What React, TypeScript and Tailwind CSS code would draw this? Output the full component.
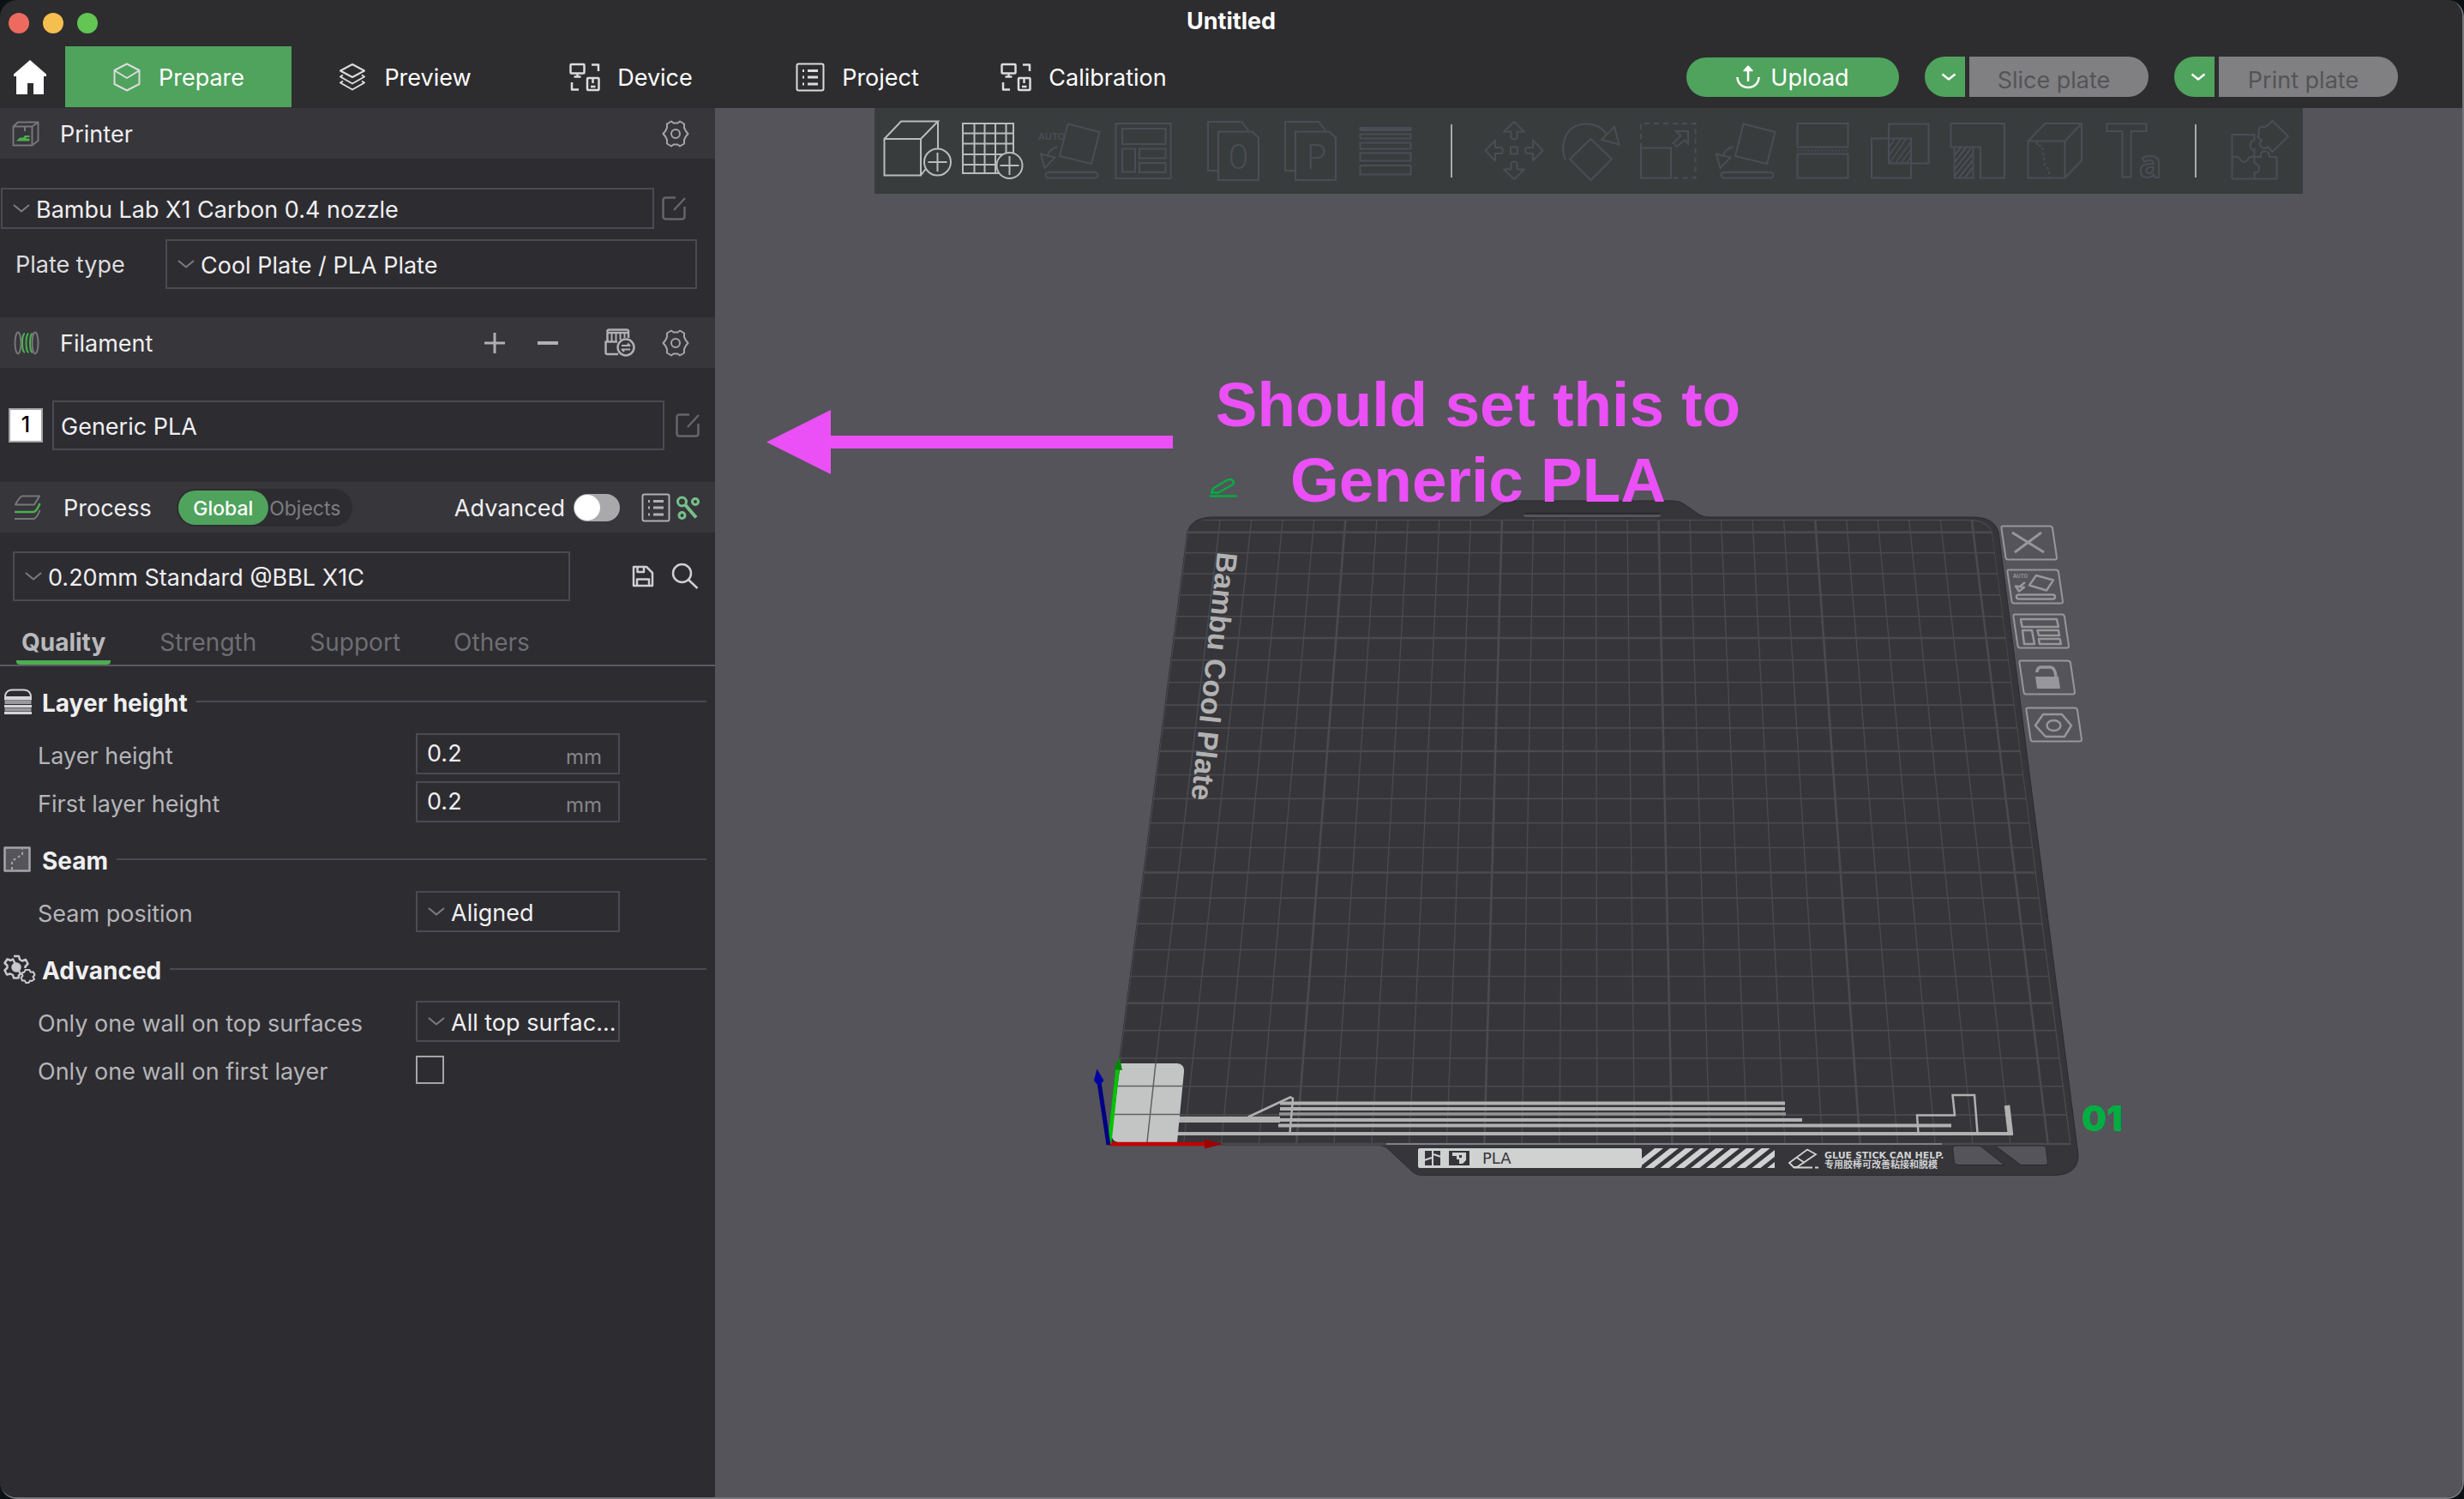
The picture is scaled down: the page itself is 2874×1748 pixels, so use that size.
import type { ReactNode } from 'react';

type IconProps = { className?: string };

const svgBase = { fill: 'none', stroke: 'currentColor', strokeWidth: 2, strokeLinejoin: 'round' as const };

/* ---------- small icons ---------- */

const HomeIcon = () => (
  <svg viewBox="0 0 40 40" className="h-10 w-10" fill="currentColor" aria-hidden="true">
    <path d="M20 0 39 16.500V19H36V40H24V27H17V40H4V19H1V16.500Z" />
  </svg>
);

const CubeIcon = () => (
  <svg viewBox="0 0 34 34" className="h-[34px] w-[34px]" {...svgBase} aria-hidden="true">
    <path d="M17 1.500 31.500 9V25L17 32.500 2.500 25V9Z" />
    <path d="M3 9.500 17 18 31 9.500" />
  </svg>
);

const StackIcon = () => (
  <svg viewBox="0 0 34 34" className="h-[34px] w-[34px]" {...svgBase} aria-hidden="true">
    <path d="M17 2 31 9.500 17 17 3 9.500Z" />
    <path d="M6 14.500 3 16.500 17 24.500 31 16.500 28 14.500" />
    <path d="M6 21.500 3 23.500 17 31.500 31 23.500 28 21.500" />
  </svg>
);

const DeviceIcon = () => (
  <svg viewBox="0 0 36 34" className="h-[34px] w-9" {...svgBase} strokeWidth={2.5} aria-hidden="true">
    <rect x="1.500" y="2" width="16" height="10.500" rx="1" />
    <path d="M9.500 12.500V16M5.500 16.500H13.500" />
    <path d="M26 2.500H34V10" />
    <path d="M3 23V31.500H11" />
    <rect x="21" y="18" width="13.500" height="14" rx="1" />
    <path d="M27.500 18V24M25 28H30.500" />
  </svg>
);

const ListIcon = ({ className = 'h-[34px] w-[34px]' }: IconProps) => (
  <svg viewBox="0 0 34 34" className={className} {...svgBase} aria-hidden="true">
    <rect x="1.500" y="1.500" width="31" height="31" rx="2" />
    <path d="M8 9.500H10M14 9.500H26M8 17H10M14 17H26M8 25H10M14 25H26" strokeWidth={3} />
  </svg>
);

const UploadIcon = () => (
  <svg viewBox="0 0 28 28" className="h-7 w-7" {...svgBase} strokeWidth={2.500} aria-hidden="true">
    <path d="M14 19V4" />
    <path d="M14 1 19 6.500H9Z" fill="currentColor" strokeWidth={1.500} />
    <path d="M1.500 14C1.500 21 7 26 14 26S26.500 21 26.500 14" />
  </svg>
);

const ChevronIcon = ({ className = '' }: IconProps) => (
  <svg viewBox="0 0 22 12" className={'h-3 w-[22px] ' + className} {...svgBase} aria-hidden="true">
    <path d="M2 2 11 9.500 20 2" />
  </svg>
);

const SmallChevron = () => (
  <svg viewBox="0 0 18 10" className="h-[10px] w-[18px]" {...svgBase} strokeWidth={2.500} aria-hidden="true">
    <path d="M1.500 1.500 9 7.500 16.500 1.500" />
  </svg>
);

const PrinterIcon = () => (
  <svg viewBox="0 0 32 30" className="h-[30px] w-8" {...svgBase} stroke="#77777b" aria-hidden="true">
    <path d="M1.500 6.500H23.500V28.500H1.500ZM1.500 6.500 7 1.500H30.500L23.500 6.500M30.500 1.500V23L23.500 28.500" />
    <path d="M15 6.500V12" />
    <path d="M5 23.500 9 19.500H13L15 17H20.500V19H16.500V20.500H20.500V23.500Z" fill="#4caf50" stroke="none" />
  </svg>
);

const GearIcon = () => (
  <svg viewBox="0 0 32 32" className="h-8 w-8" {...svgBase} aria-hidden="true">
    <path d="M11 1.500 13.500 3.500H18.500L21 1.500 26 4.500V9L28 13 30.500 16 28 19 26 23V27.500L21 30.500 18.500 28.500H13.500L11 30.500 6 27.500V23L4 19 1.500 16 4 13 6 9V4.500Z" />
    <circle cx="16" cy="16" r="5" />
  </svg>
);

const EditIcon = () => (
  <svg viewBox="0 0 28 28" className="h-7 w-7" {...svgBase} strokeWidth={2.500} aria-hidden="true">
    <path d="M16 1.500H4A3 3 0 0 0 1.500 4V24A3 3 0 0 0 4 26.500H24A3 3 0 0 0 26.500 24V12" />
    <path d="M14 16 27 2" />
  </svg>
);

const FilamentIcon = () => (
  <svg viewBox="0 0 30 28" className="h-7 w-[30px]" {...svgBase} aria-hidden="true">
    <g stroke="#77777b">
      <ellipse cx="5" cy="14" rx="3.500" ry="12.500" />
      <ellipse cx="25" cy="14" rx="3.500" ry="12.500" />
    </g>
    <path d="M13 3C9 3 9 25 13 25M17.500 3C13.500 3 13.500 25 17.500 25M22 3C18 3 18 25 22 25" stroke="#4caf50" />
  </svg>
);

const AmsIcon = () => (
  <svg viewBox="0 0 36 34" className="h-[34px] w-9" {...svgBase} strokeWidth={2.500} aria-hidden="true">
    <path d="M3.500 15V4A2 2 0 0 1 6 1.500H26A2 2 0 0 1 28 4V11M3.500 5H28" />
    <path d="M8.500 5V15M13.500 5V15M18.500 5V13M23.500 5V11" strokeWidth={2} />
    <path d="M15 15.500H1.500V28A2 2 0 0 0 3.500 30H16" />
    <circle cx="25" cy="22" r="9.500" />
    <path d="M20 20H29.500L27 17.500M30 24.500H20.500L23 27" strokeWidth={2} />
  </svg>
);

const ProcessIcon = () => (
  <svg viewBox="0 0 32 30" className="h-[30px] w-8" {...svgBase} stroke="#77777b" aria-hidden="true">
    <path d="M10 1.500H30L24 11.500H2Q7 2 10 1.500Z" />
    <path d="M1 20H23.500Q27 19 30.500 10" stroke="#4caf50" strokeWidth={2.500} />
    <path d="M1 28H23.500Q27 27 30.500 18" />
  </svg>
);

const ParamIcon = () => (
  <svg viewBox="0 0 28 30" className="h-[30px] w-7" {...svgBase} stroke="#78c08a" strokeWidth={3} aria-hidden="true">
    <circle cx="7.500" cy="8" r="5" />
    <circle cx="23" cy="8" r="3.500" />
    <circle cx="7.500" cy="24" r="3.500" />
    <path d="M11.500 12 24 26.500" strokeWidth={4} />
  </svg>
);

const SaveIcon = () => (
  <svg viewBox="0 0 26 26" className="h-[26px] w-[26px]" {...svgBase} strokeWidth={2.500} aria-hidden="true">
    <path d="M2 2H17L24 9V24H2Z" />
    <path d="M6.500 2V8H14V2M6 24V16.500H20V24" />
  </svg>
);

const SearchIcon = () => (
  <svg viewBox="0 0 32 32" className="h-8 w-8" {...svgBase} strokeWidth={2.500} aria-hidden="true">
    <circle cx="12.500" cy="12.500" r="10.500" />
    <path d="M20 20 30.500 30" />
  </svg>
);

const LayersIcon = () => (
  <svg viewBox="0 0 34 30" className="h-[30px] w-[34px]" {...svgBase} stroke="#d5d5d7" aria-hidden="true">
    <path d="M2 10C2 4 6 1.500 10 1.500H24C28 1.500 32 4 32 10Z" />
    <path d="M1 12H33M1 20.500H33M1 28.500H33" strokeWidth={3} />
    <path d="M1.500 16H32.500M1.500 24.500H32.500" stroke="#9a9a9e" strokeWidth={4} />
  </svg>
);

const SeamIcon = () => (
  <svg viewBox="0 0 32 30" className="h-[30px] w-8" {...svgBase} stroke="#a5a5a9" strokeWidth={2.500} aria-hidden="true">
    <rect x="1.500" y="1.500" width="29" height="27" fill="#55545a" />
    <path d="M10 27V17L22 9.500V3" strokeDasharray="3 3" strokeWidth={2} />
  </svg>
);

const GearsIcon = () => (
  <svg viewBox="0 0 38 34" className="h-[34px] w-[38px]" {...svgBase} stroke="#c9c9cc" strokeWidth={2.500} aria-hidden="true">
    <path d="M12 2H18L19 6 22 7.500 26 6 28.500 11 25.500 14V16M20 23 18 24 17.500 27.500H12L11 24 8 22.500 4 23.500 1.500 18.500 4.500 15.500V13L1.500 10 4.500 5.500 8.500 7 11 5.500Z" />
    <circle cx="15" cy="15" r="4.500" fill="#c9c9cc" />
    <path d="M25.500 18H30.500L31.500 20.500 35 20.500 36.500 24 34.500 26 36 29 33 31 31 30.500 29.500 33H26L25 30.500 22 30.500 20.500 27 22.500 25 21.500 21.500 24.500 20.500Z" strokeWidth={2} />
  </svg>
);

/* ---------- header ---------- */

function Tab({ icon, label, active }: { icon: ReactNode; label: string; active?: boolean }) {
  return (
    <button
      type="button"
      className={
        'flex h-[71px] w-[264px] shrink-0 items-center justify-center gap-5 text-white ' +
        (active ? 'bg-[#4fa35d]' : '')
      }
    >
      <span className="text-[#dcdcdd]">{icon}</span>
      <span className="pt-1">{label}</span>
    </button>
  );
}

function SplitButton({ label }: { label: string }) {
  return (
    <div className="flex h-[47px] gap-[5px]">
      <button
        type="button"
        aria-label={label + ' options'}
        className="flex w-[47px] items-center justify-center rounded-l-full bg-[#4fa35d] pl-2 text-white"
      >
        <SmallChevron />
      </button>
      <button type="button" className="w-[209px] rounded-r-full bg-[#808082] pr-3 pt-2 text-[#545456]">
        {label}
      </button>
    </div>
  );
}

function Header() {
  return (
    <header className="bg-[#2d2d2f] text-[27px]">
      <div className="flex h-[54px] items-center px-[10px]">
        <div className="flex flex-1 gap-4">
          <span className="h-6 w-6 rounded-full bg-[#ed6a5e]" />
          <span className="h-6 w-6 rounded-full bg-[#f5bf4f]" />
          <span className="h-6 w-6 rounded-full bg-[#62c554]" />
        </div>
        <h1 className="pb-1 text-[27px] font-bold text-white">Untitled</h1>
        <div className="flex-1" />
      </div>
      <div className="flex h-[72px] items-start pr-[75px]">
        <button type="button" aria-label="Home" className="flex h-[72px] w-[76px] items-center pl-[15px] text-white">
          <HomeIcon />
        </button>
        <nav className="flex">
          <Tab icon={<CubeIcon />} label="Prepare" active />
          <Tab icon={<StackIcon />} label="Preview" />
          <Tab icon={<DeviceIcon />} label="Device" />
          <Tab icon={<ListIcon />} label="Project" />
          <Tab icon={<DeviceIcon />} label="Calibration" />
        </nav>
        <div className="ml-auto flex items-center gap-[30px] pt-3">
          <button
            type="button"
            className="flex h-[46px] w-[248px] items-center justify-center gap-3 rounded-full bg-[#4fa35d] text-white"
          >
            <UploadIcon />
            <span className="pt-1">Upload</span>
          </button>
          <SplitButton label="Slice plate" />
          <SplitButton label="Print plate" />
        </div>
      </div>
    </header>
  );
}

/* ---------- sidebar ---------- */

function Select({ id, label, value, className, chevron = true }: {
  id: string;
  label?: string;
  value: string;
  className: string;
  chevron?: boolean;
}) {
  return (
    <div className={'relative ' + className}>
      <select
        id={id}
        aria-label={label}
        defaultValue={value}
        className={
          'h-full w-full appearance-none overflow-hidden border-2 border-[#4b4a50] bg-transparent pt-1 text-[#efeff0] outline-none ' +
          (chevron ? 'pl-[39px]' : 'pl-2')
        }
      >
        <option value={value}>{value}</option>
      </select>
      {chevron && <ChevronIcon className="pointer-events-none absolute left-[13px] top-1/2 -mt-[6px] text-[#7c7c80]" />}
    </div>
  );
}

function SectionBar({ children }: { children: ReactNode }) {
  return <div className="flex h-[59px] items-center bg-[#37363b] text-[#efeff0]">{children}</div>;
}

function IconButton({ label, className = '', children }: { label: string; className?: string; children: ReactNode }) {
  return (
    <button type="button" aria-label={label} className={'shrink-0 ' + className}>
      {children}
    </button>
  );
}

function Group({ icon, title, children }: { icon: ReactNode; title: string; children: ReactNode }) {
  return (
    <section>
      <div className="flex h-[34px] items-center pl-1 pr-[10px]">
        <span className="w-[45px]">{icon}</span>
        <h2 className="pt-1 text-[28px] font-bold text-[#efeff0]">{title}</h2>
        <span className="ml-[10px] h-[2px] flex-1 bg-[#4b4a50]" />
      </div>
      <div className="flex flex-col gap-2 pt-5">{children}</div>
    </section>
  );
}

function Row({ id, label, children }: { id: string; label: string; children: ReactNode }) {
  return (
    <div className="flex h-12 items-center">
      <label htmlFor={id} className="w-[485px] pl-11 pt-[6px] text-[#b5b5b8]">
        {label}
      </label>
      {children}
    </div>
  );
}

function NumberField({ id, value }: { id: string; value: string }) {
  return (
    <div className="flex h-12 w-[238px] items-center border-2 border-[#4b4a50] px-[11px]">
      <input id={id} defaultValue={value} className="w-full min-w-0 bg-transparent text-[#efeff0] outline-none" />
      <span className="pr-2 pt-2 text-[24px] text-[#858589]">mm</span>
    </div>
  );
}

function Sidebar() {
  return (
    <aside className="w-[834px] shrink-0 bg-[#2d2c31] text-[27px]">
      <SectionBar>
        <span className="w-[70px] pl-[14px]"><PrinterIcon /></span>
        <h2 className="pt-1">Printer</h2>
        <IconButton label="Printer settings" className="ml-auto mr-[30px] text-[#a5a5a9]"><GearIcon /></IconButton>
      </SectionBar>
      <div className="flex items-center gap-[9px] pl-[1px] pt-[34px]">
        <Select id="printer" label="Printer preset" value="Bambu Lab X1 Carbon 0.4 nozzle" className="h-12 w-[762px]" />
        <IconButton label="Edit printer preset" className="text-[#66666a]"><EditIcon /></IconButton>
      </div>
      <div className="flex items-center pb-[33px] pl-[18px] pt-3">
        <label htmlFor="plate-type" className="w-[175px] pt-[2px] text-[#dcdcdd]">Plate type</label>
        <Select id="plate-type" value="Cool Plate / PLA Plate" className="h-[58px] w-[620px]" />
      </div>

      <SectionBar>
        <span className="w-[70px] pl-4"><FilamentIcon /></span>
        <h2 className="pt-1">Filament</h2>
        <div className="ml-auto mr-[30px] flex items-center text-[#b0b0b3]">
          <IconButton label="Add filament" className="mr-9">
            <svg viewBox="0 0 26 26" className="h-[26px] w-[26px]" {...svgBase} strokeWidth={3} aria-hidden="true">
              <path d="M13 1V25M1 13H25" />
            </svg>
          </IconButton>
          <IconButton label="Remove filament" className="mr-[53px]">
            <svg viewBox="0 0 26 26" className="h-[26px] w-[26px]" {...svgBase} strokeWidth={4} aria-hidden="true">
              <path d="M1 13H25" />
            </svg>
          </IconButton>
          <IconButton label="Synchronize filaments" className="mr-[31px]"><AmsIcon /></IconButton>
          <IconButton label="Filament settings" className="text-[#a5a5a9]"><GearIcon /></IconButton>
        </div>
      </SectionBar>
      <div className="flex items-center pb-[37px] pl-[10px] pt-[38px]">
        <span className="flex h-10 w-10 items-center justify-center border-2 border-[#a5a5a9] bg-white text-[25px] font-medium text-black">
          1
        </span>
        <Select id="filament" label="Filament 1" value="Generic PLA" className="ml-[11px] h-[58px] w-[714px]" chevron={false} />
        <IconButton label="Edit filament preset" className="ml-[13px] text-[#66666a]"><EditIcon /></IconButton>
      </div>

      <SectionBar>
        <span className="w-[74px] pl-4"><ProcessIcon /></span>
        <h2 className="pt-1">Process</h2>
        <div className="ml-[29px] flex h-11 items-center rounded-full bg-[#2d2c31] pl-[2px] text-[23px]">
          <button type="button" className="h-10 w-[105px] rounded-full bg-[#4fa35d] pt-1 font-medium text-white">Global</button>
          <button type="button" className="w-[98px] pr-3 pt-1 text-[#7c7c80]">Objects</button>
        </div>
        <label htmlFor="advanced" className="ml-auto pr-[10px] pt-1">Advanced</label>
        <input
          id="advanced"
          type="checkbox"
          role="switch"
          className="relative h-8 w-[54px] appearance-none rounded-full bg-[#a9a9ab] before:absolute before:left-px before:top-px before:h-[30px] before:w-[30px] before:rounded-full before:bg-white"
        />
        <IconButton label="Parameter list" className="ml-[25px] text-[#b0b0b3]"><ListIcon /></IconButton>
        <IconButton label="Compare presets" className="ml-[6px] mr-[18px]"><ParamIcon /></IconButton>
      </SectionBar>
      <div className="flex items-center pl-[15px] pt-[22px] text-[#cfcfd1]">
        <Select id="process" label="Process preset" value="0.20mm Standard @BBL X1C" className="h-[58px] w-[650px]" />
        <IconButton label="Save preset" className="ml-[72px]"><SaveIcon /></IconButton>
        <IconButton label="Search settings" className="ml-5"><SearchIcon /></IconButton>
      </div>

      <div className="flex h-[76px] items-end border-b-2 border-[#5a595f] pl-[19px] text-[28px] text-[#6e6e72]">
        <button type="button" className="h-12 rounded-b-sm border-b-[5px] border-[#4caf50] px-[6px] font-bold text-[#b9b9bc]">
          Quality
        </button>
        <button type="button" className="ml-[57px] h-12 border-b-[5px] border-transparent">Strength</button>
        <button type="button" className="ml-[62px] h-12 border-b-[5px] border-transparent">Support</button>
        <button type="button" className="ml-[62px] h-12 border-b-[5px] border-transparent">Others</button>
      </div>

      <div className="flex flex-col gap-[26px] pt-6 text-[27px]">
        <Group icon={<LayersIcon />} title="Layer height">
          <Row id="layer-height" label="Layer height"><NumberField id="layer-height" value="0.2" /></Row>
          <Row id="first-layer-height" label="First layer height"><NumberField id="first-layer-height" value="0.2" /></Row>
        </Group>
        <Group icon={<SeamIcon />} title="Seam">
          <Row id="seam-position" label="Seam position">
            <Select id="seam-position" value="Aligned" className="h-12 w-[238px]" />
          </Row>
        </Group>
        <Group icon={<GearsIcon />} title="Advanced">
          <Row id="top-wall" label="Only one wall on top surfaces">
            <Select id="top-wall" value="All top surfac..." className="h-12 w-[238px]" />
          </Row>
          <Row id="first-wall" label="Only one wall on first layer">
            <input id="first-wall" type="checkbox" className="h-[33px] w-[33px] appearance-none border-2 border-[#a5a5a9]" />
          </Row>
        </Group>
      </div>
    </aside>
  );
}

/* ---------- canvas toolbar ---------- */

function Tool({ label, active, children }: { label: string; active?: boolean; children: ReactNode }) {
  return (
    <button type="button" aria-label={label} className={active ? 'text-[#b9bcba]' : 'text-[#4c4d54]'}>
      <svg viewBox="0 0 90 100" className="h-[100px] w-[90px] overflow-visible" {...svgBase} strokeLinejoin="miter">
        {children}
      </svg>
    </button>
  );
}

const Divider = () => (
  <span className="flex w-[58px] items-center justify-center">
    <span className="h-[62px] w-[2px] bg-[#a9aaab]" />
  </span>
);

const pages = (
  <>
    <path d="M27 73H15V16H54L62 26" />
    <path d="M27 27.500H66.500L74 34.500V84H27Z" />
  </>
);

const layFlat = (
  <>
    <path d="M41.500 18.500 78.500 28 69 65 32 56Z" />
    <path d="M10 53.500 26.500 57.500 14.500 70Z" />
    <path d="M18 55Q20 48 29.500 45" />
    <rect x="15.500" y="75" width="61" height="6.500" rx="3.200" />
  </>
);

function Toolbar() {
  return (
    <div className="mx-auto flex w-max bg-[#383c3d] pl-1 pr-[6px]" role="toolbar">
      <Tool label="Add object" active>
        <path d="M7.500 36H50V78.500H7.500ZM7.500 36 27 15.500H70L50 36M70 15.500V47M50 78.500 56.500 70" />
        <circle cx="69.500" cy="63" r="15.500" />
        <path d="M69.500 52V74M58.500 63H80.500" />
      </Tool>
      <Tool label="Add plate" active>
        <rect x="9" y="18" width="59" height="58" />
        <path d="M22.500 18V76M34.500 18V76M47 18V76M59.500 18V76M9 29.500H68M9 41.500H68M9 54H68M9 66H68" />
        <circle cx="63.500" cy="67" r="15" fill="#383c3d" />
        <path d="M63.500 56V78M52.500 67H74.500" />
      </Tool>
      <Tool label="Auto orient">
        {layFlat}
        <text x="7" y="37" fontSize="11" fontWeight="600" fill="currentColor" stroke="none" className="font-['Liberation_Sans']">AUTO</text>
      </Tool>
      <Tool label="Arrange">
        <rect x="7.500" y="18" width="64" height="64" />
        <rect x="15" y="24" width="50.500" height="18" />
        <rect x="15" y="47.500" width="15" height="27" />
        <rect x="35" y="47.500" width="30.500" height="11" />
        <rect x="35" y="64" width="30.500" height="11" />
      </Tool>
      <span className="w-[10px]" />
      <Tool label="Split to objects">
        {pages}
        <text x="50.500" y="71" fontSize="41" fontWeight="300" textAnchor="middle" fill="currentColor" stroke="none" className="font-['Open_Sans']">0</text>
      </Tool>
      <Tool label="Split to parts">
        {pages}
        <text x="51.500" y="71" fontSize="41" fontWeight="300" textAnchor="middle" fill="currentColor" stroke="none" className="font-['Open_Sans']">P</text>
      </Tool>
      <Tool label="Variable layer height">
        <rect x="12.500" y="23" width="59" height="3" fill="currentColor" />
        <rect x="12.500" y="30.500" width="59" height="5" />
        <rect x="12.500" y="40.500" width="59" height="7" />
        <rect x="12.500" y="52.500" width="59" height="9" />
        <rect x="12.500" y="67" width="59" height="10.500" />
      </Tool>
      <Divider />
      <Tool label="Move">
        {[0, 90, 180, 270].map((a) => (
          <path key={a} transform={`rotate(${a} 44 49.500)`} d="M44 16 56 27.500H47.500V35Q44 38 40.500 35V27.500H32Z" strokeLinejoin="round" />
        ))}
        <rect x="40" y="45.500" width="8" height="8" />
      </Tool>
      <Tool label="Rotate">
        <path d="M43.500 36 68 59.500 43.500 84 19 59.500Z" />
        <path d="M14 61C8 46 11 19 38 18.500Q54 18.500 62 30.500" />
        <path d="M71 22 76.500 42.500 56 37Z" />
      </Tool>
      <Tool label="Scale">
        <path d="M12 47V18H75.500V81.500H47" strokeDasharray="6 5" />
        <rect x="12" y="46.500" width="35" height="35" />
        <path d="M53 27H67V41.500L63 37.500 53.500 45 49.500 41 58.500 32.500Z" />
      </Tool>
      <Tool label="Place on face">{layFlat}</Tool>
      <Tool label="Cut">
        <rect x="14.500" y="18" width="59" height="27.500" />
        <path d="M14.500 49.500H73.500" strokeDasharray="2 2" />
        <rect x="14.500" y="53.500" width="59" height="28" />
      </Tool>
      <Tool label="Boolean">
        <rect x="31" y="18.500" width="46.500" height="46" />
        <rect x="11" y="35.500" width="46" height="46" />
        <path d="M31 46 38 36M31 56 45 36M32 64 51 36.500M39 64 57 39M45.500 64 57 48M52 64 57 57" strokeWidth={1.500} />
      </Tool>
      <Tool label="Support painting">
        <path d="M13.500 18H76V81.500H48V45.500H13.500Z" />
        <path d="M17.500 46V81.500H39.500V46" />
        <path d="M18 55 25 46M18 63 31 46.500M18 71 37 47M18 79 39 53M23 81 39 61M30 81 39 69" strokeWidth={2.500} />
      </Tool>
      <Tool label="Seam painting">
        <path d="M13.500 38.500H56.500V81.500H13.500ZM13.500 38.500 33.500 18H76V61L56.500 81.500M56.500 38.500 76 18" />
        <path d="M24 40V44H30L33 66 38 72V81" strokeDasharray="3 3" />
      </Tool>
      <Tool label="Text shape">
        <text x="38.500" y="81" fontSize="86" fontWeight="600" textAnchor="middle" className="font-['Open_Sans']">T</text>
        <text x="66" y="81" fontSize="44" fontWeight="700" textAnchor="middle" className="font-['Open_Sans']">a</text>
      </Tool>
      <Divider />
      <Tool label="Assembly view">
        <path d="M13.500 82.500V31H39.500V37Q33 40 35 46 37 50 39.500 48V57Q33 56 32 60 27 66 23 60 22 56 13.500 57M39.500 57H47Q46 50 52 50.500 57 50 57 57H65.500V82.500H13.500M39.500 57V64Q46 66 45 71 45 76 39.500 75V82.500" />
        <path d="M60.500 15 79 33 60.500 51 55 45Q51 49 47 45 44 41 48 38L43 33 45 30Q43 20 51 22L54 21Z" />
      </Tool>
    </div>
  );
}

/* ---------- build plate ---------- */

/* Perspective row of the bed grid; k counts centimetres from the front edge. */
const rowY = (k: number) => (1334 - 23.667 * k) / (1 + 0.007838 * k);
const TOP_Y = rowY(25.6);
const frontX = (k: number) => 1293 + 43.83 * k;
const backX = (k: number) => 1386.6 + 36.53 * k;
const sideX = (k: number, y: number) => frontX(k) + ((backX(k) - frontX(k)) * (1334 - y)) / (1334 - TOP_Y);
const ticks = Array.from({ length: 26 }, (_, i) => i);

function PlateButton({ label, className, children }: { label: string; className: string; children: ReactNode }) {
  return (
    <button type="button" aria-label={label} className={'absolute text-[#97969b] ' + className}>
      <svg viewBox="0 0 68 43" className="h-[43px] w-[68px]" {...svgBase} strokeWidth={2.500}>
        <path d="M3 1.500H58Q60.500 1.500 61 4L66 38Q66 40.500 64 40.500H9Q7 40.500 6.500 38L1.500 4Q1 1.500 3 1.500Z" strokeWidth={2} />
        {children}
      </svg>
    </button>
  );
}

function Plate() {
  return (
    <div className="absolute left-[436px] top-[414px] h-[840px] w-[1230px]">
      <svg viewBox="1270 540 1230 840" className="h-full w-full" role="img" aria-label="Build plate 01">
        <defs>
          <clipPath id="bed">
            <path d="M1293 1336 1385 620Q1392 606 1412 605.500H2296Q2320 606 2324 622L2416 1336Z" />
          </clipPath>
          <clipPath id="hatch">
            <rect x="1915" y="1339" width="155" height="23" />
          </clipPath>
        </defs>

        <path
          d="M1293 1335 1385 620Q1390 604 1412 603H1724Q1733 603 1738 598L1750 589Q1757 584 1766 584H1952Q1960 584 1966 589L1979 598Q1985 603 1994 603H2304Q2326 604 2331 620L2424 1347Q2424 1369 2398 1370.500H1658Q1650 1370 1645 1364L1617 1338Q1612 1335 1603 1335Z"
          fill="#36353a"
          stroke="#2b2a2f"
          strokeWidth="1"
        />
        <rect x="1777" y="599" width="160" height="4" rx="2" fill="#55545a" />
        <path d="M1778 599H1936" stroke="#222226" strokeWidth="1.500" />

        <g clipPath="url(#bed)" stroke="#4a4a4f" fill="none">
          {ticks.map((k) => (
            <path key={'r' + k} d={`M${sideX(0, rowY(k))} ${rowY(k)}H${sideX(25.6, rowY(k))}`} strokeWidth={k % 5 ? 1.6 : 2.600} />
          ))}
          {ticks.map((k) => (
            <path key={'c' + k} d={`M${frontX(k)} 1334 ${backX(k)} ${TOP_Y}`} strokeWidth={k % 5 ? 1.4 : 2.600} />
          ))}
          <path d={`M1386 ${TOP_Y}H2300Q2320 608 2324 622L2415 1334`} strokeWidth="1.600" />
        </g>

        <g stroke="#b1b1b1" fill="none">
          <path d="M1375 1305.500H1493" strokeWidth="7" />
          <path d="M1373 1322H2348" strokeWidth="4" />
          <path d="M1493 1286.500H2082M1493 1293H2082M1492 1306H2102M1491 1312.500H2276" strokeWidth="4" />
          <path d="M1492 1299H2083" strokeWidth="3.500" stroke="#939294" />
          <path d="M1456 1302.500 1505 1279.500 1508 1281 1504.500 1321" strokeWidth="2.500" />
          <path d="M2237.500 1321 2236 1300.500H2280L2277.500 1277H2303L2306.500 1321" strokeWidth="2.500" />
          <path d="M2341 1289 2345 1323" strokeWidth="6.500" />
        </g>

        <path d="M1307 1240H1373Q1382 1241 1381 1250L1373 1332H1304Q1297 1331 1296 1322Z" fill="#c3c5c4" />
        <path d="M1348 1240 1338 1332M1304 1266.500H1380M1300 1299.500H1377" stroke="#606064" strokeWidth="1.500" />

        <path d="M1293 1334.500H1617" stroke="#47474c" strokeWidth="2" />
        <path d="M1617 1334H2265" stroke="#7d8184" strokeWidth="2" />

        <rect x="1654" y="1339" width="261" height="23" rx="2" fill="#d0d2d2" />
        <g fill="#36353a">
          <rect x="1662" y="1342" width="8" height="17" />
          <rect x="1672" y="1342" width="8" height="17" />
          <rect x="1690" y="1342" width="24" height="17" />
        </g>
        <path d="M1661 1353 1670 1350M1672 1346 1681 1349" stroke="#d0d2d2" strokeWidth="2" />
        <path d="M1694 1344H1710V1353L1706 1357H1702V1352H1699V1348H1694Z" fill="#d0d2d2" />
        <rect x="1702" y="1347" width="3" height="3" fill="#36353a" />
        <text x="1729" y="1357" fontSize="18" fill="#36353a" className="font-['DejaVu_Sans']">PLA</text>
        <g clipPath="url(#hatch)" fill="#d0d2d2">
          {ticks.slice(0, 11).map((i) => (
            <path key={i} d={`M${1901 + i * 17.8} 1362h10l29 -23h-10Z`} />
          ))}
        </g>

        <path d="M2087 1356 2108 1340.500 2118 1346 2096 1361H2092ZM2096 1350 2105 1356M2092 1361.500H2114M2117 1361.500H2121" fill="none" stroke="#d0d2d2" strokeWidth="1.800" />
        <text x="2128" y="1351" fontSize="11" fontWeight="700" fill="#d0d2d2" className="font-['DejaVu_Sans']">GLUE STICK CAN HELP.</text>
        <text x="2128" y="1362" fontSize="11" fontWeight="700" fill="#d0d2d2" className="font-['Noto_Sans_CJK_SC']">专用胶棒可改善粘接和脱模</text>
        <path d="M2281 1336H2306Q2310 1336 2312 1338L2338 1358.500H2284Q2280 1358 2279.500 1356L2277.500 1339Q2278 1336 2281 1336ZM2327 1336H2383Q2386 1336 2386.500 1339L2388.500 1356Q2388 1358.500 2386 1358.500H2357Z" fill="#55545a" stroke="#29282d" strokeWidth="1" />

        <text transform="translate(1420 643) rotate(96)" fontSize="34" fontWeight="700" fill="#b1b1b1" className="font-['Liberation_Sans']">
          Bambu Cool Plate
        </text>
        <text x="2428" y="1319" fontSize="41" fontWeight="900" fill="#00ae42">01</text>

        <g fill="none" stroke="#00ae42" strokeWidth="2.500" strokeLinejoin="round">
          <path d="M1413 574.500 1415 569.500 1432 559.500Q1437 558 1439 561.500L1438 565 1421 574.500Z" />
          <path d="M1411 578.500H1443" />
        </g>

        <path d="M1294 1334H1406" stroke="#c40000" strokeWidth="4.500" />
        <path d="M1405 1328.500 1426 1334 1405 1339.500Z" fill="#a00000" />
        <path d="M1294 1334 1303.500 1247" stroke="#00c400" strokeWidth="4.500" />
        <path d="M1299 1247 1306 1233 1309 1248Z" fill="#008a00" />
        <path d="M1293 1335 1282 1262" stroke="#000084" strokeWidth="5" />
        <path d="M1276 1260 1279.500 1246.500 1287.500 1260 1284 1264H1279Z" fill="#0000a8" />
      </svg>

      <PlateButton label="Remove plate" className="left-[1063px] top-[72px]">
        <path d="M14 9 51 32M48 9 17 32" strokeWidth={3} />
      </PlateButton>
      <PlateButton label="Auto orient plate" className="left-[1070px] top-[123px]">
        <path d="M35 8 55 13.500 47 25.500 27 19.500ZM11 20.500 21 22 15 26.500ZM16 21 22 16" />
        <rect x="12" y="30.500" width="45" height="5" rx="2.500" />
        <text x="8" y="11" fontSize="6" fontWeight="700" fill="currentColor" stroke="none">AUTO</text>
      </PlateButton>
      <PlateButton label="Arrange plate" className="left-[1077px] top-[175px]">
        <path d="M10 7H52L54 16H11.500ZM12 20H23L26 36H14ZM29.500 20H54L55 26H31ZM31 30H55.500L57 36H32Z" />
      </PlateButton>
      <PlateButton label="Lock plate" className="left-[1084px] top-[229px]">
        <path d="M20 20H47L49 34H22Z" fill="currentColor" stroke="none" />
        <path d="M22 15Q22 9 27 9H37Q43 9 44 20" strokeWidth={3.500} />
      </PlateButton>
      <PlateButton label="Plate settings" className="left-[1092px] top-[284px]">
        <path d="M12 22 21 9H43L54 22 46 35H24Z" />
        <ellipse cx="33.500" cy="22" rx="8" ry="6" />
      </PlateButton>
    </div>
  );
}

function Canvas() {
  return (
    <main className="relative min-w-0 flex-1 overflow-hidden bg-[#55545a]">
      <Toolbar />
      <Plate />
      <svg viewBox="0 0 474 75" className="absolute left-[60px] top-[352px] h-[75px] w-[474px]" fill="#ea50f6" aria-hidden="true">
        <path d="M0 37.500 75 0V30H474V45H75V75Z" />
      </svg>
      <p className="absolute left-[570px] top-[302px] w-[640px] text-center font-['Liberation_Sans'] text-[73px] font-bold leading-[88px] text-[#ea50f6]">
        Should set this to Generic PLA
      </p>
    </main>
  );
}

export default function App() {
  return (
    <div className="h-screen bg-[#0c1116] font-['Inter',sans-serif]">
      <div className="flex h-full flex-col overflow-hidden rounded-[20px] border-b-2 border-r-2 border-[#77767b]">
        <Header />
        <div className="flex min-h-0 flex-1">
          <Sidebar />
          <Canvas />
        </div>
      </div>
    </div>
  );
}
